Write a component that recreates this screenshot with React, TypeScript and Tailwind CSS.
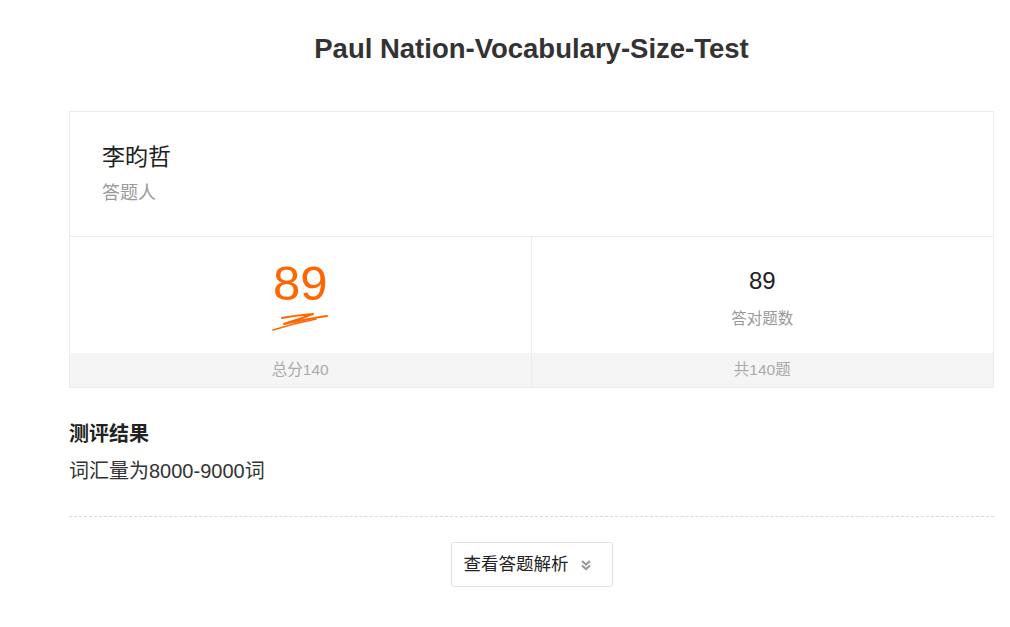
import React from "react";

export default function App() {
  return (
    <div className="min-h-[627px] bg-white text-[#333]" style={{ fontFamily: '"Liberation Sans", Arial, "Noto Sans CJK SC", sans-serif' }}>
      <div className="ml-[69px] w-[925px]">
        <h1 className="pt-[31px] text-center text-[27.5px] font-bold leading-[36px] text-[#333]">Paul Nation-Vocabulary-Size-Test</h1>
        <div className="mt-[44px] border border-[#ececec]">
          <div className="h-[125px] border-b border-[#ececec] px-[32px] pt-[29px]">
            <div className="text-[23px] leading-[32px] text-[#222]">李昀哲</div>
            <div className="mt-[8px] text-[18px] leading-[24px] text-[#999]">答题人</div>
          </div>
          <div className="grid grid-cols-2">
            <div className="flex flex-col border-r border-[#ececec]">
              <div className="flex h-[116px] flex-col items-center pt-[18px]">
                <div className="text-[49px] leading-[56px] text-[#ff6600]">89</div>
                <svg width="58" height="22" viewBox="0 0 58 22" className="-mt-[1px]">
                  <path d="M11 8 C20 6 30 5 42 4 C32 8 22 11 13 14 C25 12 40 8 56 6" fill="none" stroke="#ff6600" strokeWidth="2" strokeLinecap="round" strokeLinejoin="round" />
                  <path d="M2 20 C15 16 30 12 45 9" fill="none" stroke="#ff6600" strokeWidth="1.6" strokeLinecap="round" />
                </svg>
              </div>
              <div className="flex h-[34px] items-center justify-center bg-[#f5f5f5] text-[15.5px] text-[#aaa]">总分140</div>
            </div>
            <div className="flex flex-col">
              <div className="flex h-[116px] flex-col items-center pt-[30px]">
                <div className="text-[24px] leading-[28px] text-[#222]">89</div>
                <div className="mt-[14px] text-[15.5px] leading-[20px] text-[#999]">答对题数</div>
              </div>
              <div className="flex h-[34px] items-center justify-center bg-[#f5f5f5] text-[15.5px] text-[#aaa]">共140题</div>
            </div>
          </div>
        </div>
        <div className="mt-[32px] text-[20px] font-bold leading-[28px] text-[#222]">测评结果</div>
        <div className="mt-[9px] text-[20px] leading-[28px] text-[#333]">词汇量为8000-9000词</div>
        <div className="mt-[31px] border-t border-dashed border-[#d9d9d9]" />
        <div className="mt-[25px] flex justify-center">
          <button className="flex h-[45px] w-[162px] items-center justify-start gap-[11px] rounded-[3px] border border-[#e0e0e0] bg-white pl-[12px] text-[17.5px] text-[#222]">
            <span>查看答题解析</span>
            <svg width="12" height="12" viewBox="0 0 12 12">
              <path d="M2 2 L6 5.5 L10 2" fill="none" stroke="#999" strokeWidth="2.2" />
              <path d="M2 6.5 L6 10 L10 6.5" fill="none" stroke="#999" strokeWidth="2.2" />
            </svg>
          </button>
        </div>
      </div>
    </div>
  );
}
